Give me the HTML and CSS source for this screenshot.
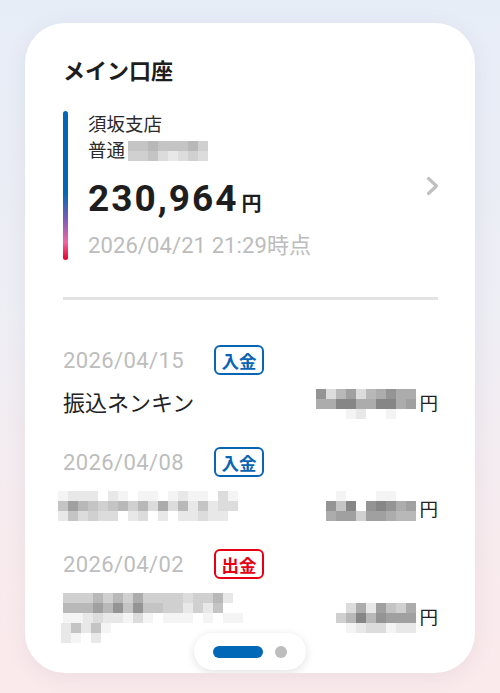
FILE: index.html
```html
<!DOCTYPE html>
<html lang="ja">
<head>
<meta charset="utf-8">
<title>メイン口座</title>
<link rel="stylesheet" href="styles.css">
</head>
<body>
<main class="card">
  <h1 class="title">メイン口座</h1>

  <section class="account">
    <div class="bar"></div>
    <div class="info">
      <div class="branch">須坂支店</div>
      <div class="type">普通<div class="mosaic c8 acct">
        <i class="s5"></i><i class="s5"></i><i class="s6"></i><i class="s5"></i><i class="s5"></i><i class="s5"></i><i class="s6"></i><i class="s4"></i>
        <i class="s4"></i><i class="s4"></i><i class="s5"></i><i class="s3"></i><i class="s2"></i><i class="s3"></i><i class="s4"></i><i class="s3"></i>
      </div></div>
      <div class="balance"><span class="num">230,964</span><span class="yen">円</span></div>
      <div class="stamp">2026/04/21 21:29時点</div>
    </div>
    <svg class="chev" width="14" height="20" viewBox="0 0 14 20"><polyline points="2.5,2.5 10.5,10 2.5,17.5" fill="none" stroke="#c0c0c0" stroke-width="3.2" stroke-linecap="round" stroke-linejoin="round"/></svg>
  </section>

  <hr class="divider">

  <ul class="tx">
    <li class="row">
      <div class="head"><span class="date">2026/04/15</span><span class="badge in">入金</span></div>
      <div class="body">
        <span class="name">振込ネンキン</span>
        <span class="amount">
          <span class="mosaic c10">
            <i class="s9"></i><i class="s3"></i><i class="s6"></i><i class="s8"></i><i class="s3"></i><i class="s6"></i><i class="s7"></i><i class="s9"></i><i class="s7"></i><i class="s7"></i>
            <i class="s7"></i><i class="s7"></i><i class="sa"></i><i class="sa"></i><i class="s7"></i><i class="s7"></i><i class="sa"></i><i class="sa"></i><i class="s7"></i><i class="s8"></i>
            <i class="s0"></i><i class="s0"></i><i class="s0"></i><i class="s1"></i><i class="s2"></i><i class="s0"></i><i class="s0"></i><i class="s1"></i><i class="s0"></i><i class="s0"></i>
          </span><span class="en">円</span>
        </span>
      </div>
    </li>
    <li class="row">
      <div class="head"><span class="date">2026/04/08</span><span class="badge in">入金</span></div>
      <div class="body">
        <span class="mosaic c18 shift">
          <i class="s1"></i><i class="s2"></i><i class="s2"></i><i class="s2"></i><i class="s0"></i><i class="s2"></i><i class="s1"></i><i class="s0"></i><i class="s1"></i><i class="s1"></i><i class="s0"></i><i class="s1"></i><i class="s2"></i><i class="s1"></i><i class="s1"></i><i class="s0"></i><i class="s3"></i><i class="s1"></i>
          <i class="s5"></i><i class="s8"></i><i class="s6"></i><i class="s5"></i><i class="s4"></i><i class="s5"></i><i class="s6"></i><i class="s4"></i><i class="s6"></i><i class="s3"></i><i class="s7"></i><i class="s3"></i><i class="s6"></i><i class="s2"></i><i class="s5"></i><i class="s2"></i><i class="s3"></i><i class="s3"></i>
          <i class="s2"></i><i class="s5"></i><i class="s3"></i><i class="s4"></i><i class="s3"></i><i class="s3"></i><i class="s0"></i><i class="s2"></i><i class="s3"></i><i class="s0"></i><i class="s2"></i><i class="s0"></i><i class="s2"></i><i class="s2"></i><i class="s3"></i><i class="s2"></i><i class="s2"></i><i class="s0"></i>
        </span>
        <span class="amount">
          <span class="mosaic c9">
            <i class="s0"></i><i class="s1"></i><i class="s0"></i><i class="s0"></i><i class="s0"></i><i class="s1"></i><i class="s1"></i><i class="s0"></i><i class="s0"></i>
            <i class="s9"></i><i class="s5"></i><i class="sa"></i><i class="s0"></i><i class="s9"></i><i class="sa"></i><i class="s9"></i><i class="s7"></i><i class="s8"></i>
            <i class="s7"></i><i class="s8"></i><i class="s8"></i><i class="s4"></i><i class="s8"></i><i class="s8"></i><i class="s7"></i><i class="s6"></i><i class="s6"></i>
          </span><span class="en low">円</span>
        </span>
      </div>
    </li>
    <li class="row">
      <div class="head"><span class="date">2026/04/02</span><span class="badge out">出金</span></div>
      <div class="body">
        <span class="namemosaic">
          <span class="mosaic c18">
            <i class="s4"></i><i class="s4"></i><i class="s4"></i><i class="s6"></i><i class="s4"></i><i class="s6"></i><i class="s4"></i><i class="s7"></i><i class="s4"></i><i class="s4"></i><i class="s4"></i><i class="s4"></i><i class="s3"></i><i class="s4"></i><i class="s4"></i><i class="s6"></i><i class="s2"></i><i class="s0"></i>
            <i class="s6"></i><i class="s6"></i><i class="s6"></i><i class="s8"></i><i class="s6"></i><i class="s9"></i><i class="s5"></i><i class="s9"></i><i class="s5"></i><i class="s5"></i><i class="s4"></i><i class="s4"></i><i class="s2"></i><i class="s4"></i><i class="s2"></i><i class="s5"></i><i class="s0"></i><i class="s0"></i>
            <i class="s1"></i><i class="s1"></i><i class="s2"></i><i class="s3"></i><i class="s2"></i><i class="s2"></i><i class="s1"></i><i class="s3"></i><i class="s1"></i><i class="s0"></i><i class="s1"></i><i class="s1"></i><i class="s1"></i><i class="s0"></i><i class="s1"></i><i class="s0"></i><i class="s1"></i><i class="s1"></i>
          </span>
          <span class="mosaic c5 tail">
            <i class="s2"></i><i class="s5"></i><i class="s2"></i><i class="s5"></i><i class="s1"></i>
            <i class="s2"></i><i class="s1"></i><i class="s0"></i><i class="s2"></i><i class="s0"></i>
          </span>
        </span>
        <span class="amount">
          <span class="mosaic c8">
            <i class="s0"></i><i class="s3"></i><i class="s7"></i><i class="s2"></i><i class="s8"></i><i class="s5"></i><i class="s4"></i><i class="s7"></i>
            <i class="s4"></i><i class="s6"></i><i class="sa"></i><i class="s6"></i><i class="s9"></i><i class="s8"></i><i class="s8"></i><i class="s8"></i>
            <i class="s0"></i><i class="s1"></i><i class="s2"></i><i class="s3"></i><i class="s3"></i><i class="s1"></i><i class="s2"></i><i class="s2"></i>
          </span><span class="en">円</span>
        </span>
      </div>
    </li>
  </ul>

  <nav class="pager">
    <span class="dot active"></span>
    <span class="dot"></span>
  </nav>
</main>
</body>
</html>
```

FILE: styles.css
```css
* { box-sizing: border-box; }

html, body {
  margin: 0;
  padding: 0;
}

body {
  width: 500px;
  height: 693px;
  overflow: hidden;
  background: linear-gradient(180deg, #e7edf7 0%, #eeeef5 45%, #f8ebee 80%, #fbeaec 100%);
  font-family: Roboto, "Noto Sans CJK JP", sans-serif;
  color: #222;
  padding-top: 23px;
}

.card {
  position: relative;
  margin: 0 25px;
  height: 650px;
  background: #fff;
  border-radius: 40px;
  box-shadow: 0 4px 22px rgba(60, 60, 90, 0.08);
  padding: 34px 37px 0 38px;
  overflow: hidden;
}

.title {
  margin: 0;
  font-size: 22px;
  line-height: 30px;
  font-weight: 700;
  color: #1e1e1e;
}

.account {
  display: flex;
  align-items: center;
  margin-top: 24px;
}

.bar {
  align-self: stretch;
  width: 5px;
  border-radius: 3px;
  background: linear-gradient(180deg, #0068b7 0%, #0068b7 55%, #7a5ab8 72%, #f066a6 88%, #e60025 100%);
}

.info {
  flex: 1;
  margin-left: 20px;
  padding-top: 1px;
}

.branch,
.type {
  font-size: 18.5px;
  line-height: 26px;
  color: #2a2a2a;
}

.type {
  display: flex;
  align-items: center;
}

.balance {
  display: flex;
  align-items: baseline;
  margin-top: 13px;
  line-height: 44px;
}

.num {
  font-size: 37px;
  font-weight: 700;
  letter-spacing: 2px;
  color: #1e1e1e;
}

.yen {
  font-size: 20px;
  font-weight: 700;
  margin-left: 3px;
  color: #1e1e1e;
}

.stamp {
  margin-top: 6px;
  font-size: 22px;
  line-height: 28px;
  color: #bcbcbc;
  letter-spacing: 0.1px;
}

.chev {
  display: block;
  margin-left: 10px;
  margin-right: -2px;
}

.divider {
  margin: 37px 0 0;
  border: 0;
  height: 3px;
  background: #e3e3e3;
}

.tx {
  list-style: none;
  margin: 45px 0 0;
  padding: 0;
}

.row + .row {
  margin-top: 28px;
}

.head {
  display: flex;
  align-items: center;
  height: 30px;
}

.date {
  width: 151px;
  font-size: 22px;
  color: #bdbdbd;
  letter-spacing: 0.4px;
}

.badge {
  display: flex;
  align-items: center;
  justify-content: center;
  width: 50px;
  height: 30px;
  border: 2px solid;
  border-radius: 6px;
  font-size: 17.5px;
  font-weight: 700;
}

.badge.in { color: #0a64b4; border-color: #0a64b4; }
.badge.out { color: #e60012; border-color: #e60012; }

.body {
  display: flex;
  align-items: center;
  justify-content: space-between;
  margin-top: 14px;
  min-height: 30px;
}

.name {
  font-size: 22px;
  line-height: 30px;
  color: #222;
}

.amount {
  display: flex;
  align-items: center;
}

.en {
  font-size: 18.5px;
  line-height: 20px;
  margin-left: 3px;
  color: #222;
}

.en.low { margin-top: 8px; }

.mosaic {
  display: grid;
  grid-auto-rows: 10px;
}

.mosaic i { display: block; }

.c5 { grid-template-columns: repeat(5, 10px); }
.c8 { grid-template-columns: repeat(8, 10px); }
.c9 { grid-template-columns: repeat(9, 10px); }
.c10 { grid-template-columns: repeat(10, 10px); }
.c18 { grid-template-columns: repeat(18, 10px); }

.acct { margin-left: 3px; }
.shift { margin-left: -5px; }

.namemosaic {
  display: flex;
  flex-direction: column;
}

.tail { margin-left: -2px; }

.s0 { background: #ffffff; }
.s1 { background: #f4f4f4; }
.s2 { background: #e8e8e8; }
.s3 { background: #dcdcdc; }
.s4 { background: #d0d0d0; }
.s5 { background: #c4c4c4; }
.s6 { background: #b8b8b8; }
.s7 { background: #acacac; }
.s8 { background: #a0a0a0; }
.s9 { background: #949494; }
.sa { background: #868686; }

.pager {
  position: absolute;
  left: 169px;
  bottom: 3px;
  width: 112px;
  height: 37px;
  border-radius: 19px;
  background: #fff;
  box-shadow: 0 2px 10px rgba(0, 0, 0, 0.12);
  display: flex;
  align-items: center;
  justify-content: center;
  gap: 12px;
}

.dot {
  width: 12px;
  height: 12px;
  border-radius: 6px;
  background: #bdbdbd;
}

.dot.active {
  width: 50px;
  background: #0068b7;
}
```
